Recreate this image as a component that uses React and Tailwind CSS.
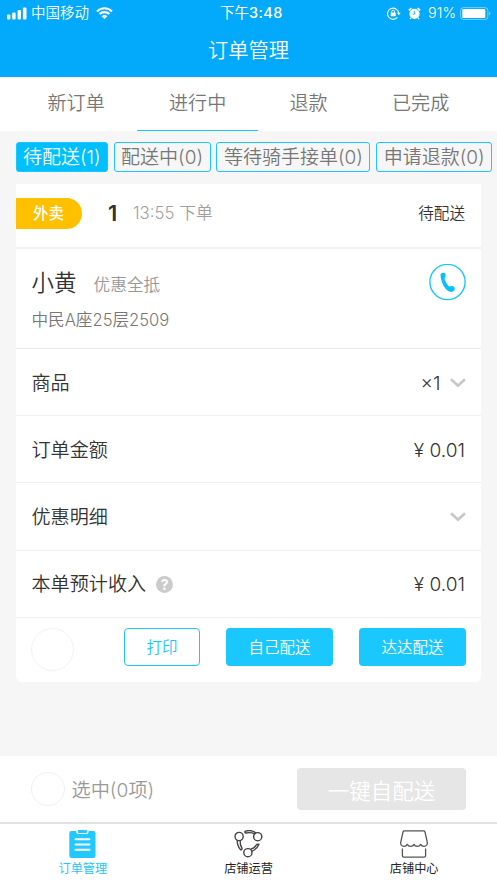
import React from 'react';
import clsx from 'clsx';

const TABS = [
  { label: '新订单', width: 'w-[137px]', offset: 'pl-[47.5px]' },
  { label: '进行中', width: 'w-[121px]', offset: 'pl-8', active: true },
  { label: '退款', width: 'w-[121px]', offset: 'pl-[31.5px]' },
  { label: '已完成', width: 'w-[118px]', offset: 'pl-[13px]' },
];

const FILTERS = [
  { label: '待配送', count: 1, width: 'w-[92px]', active: true },
  { label: '配送中', count: 0, width: 'w-[97px]' },
  { label: '等待骑手接单', count: 0, width: 'w-[154px]' },
  { label: '申请退款', count: 0, width: 'w-[116px]' },
];

function SignalIcon() {
  return (
    <svg className="w-5 h-[13px]" viewBox="0 0 20 13" fill="#fff">
      <rect x="0" y="7.5" width="3.4" height="5" rx="1" />
      <rect x="5.2" y="5.5" width="3.4" height="7" rx="1" />
      <rect x="10.6" y="3" width="3.4" height="9.5" rx="1" />
      <rect x="15.9" y="0.5" width="3.6" height="12" rx="1" />
    </svg>
  );
}

function WifiIcon() {
  return (
    <svg className="w-[17px] h-3" viewBox="0 0 17 12" fill="none" stroke="#fff" strokeWidth="2.1">
      <path d="M1 4.4C5.2.1 11.8.1 16 4.4" />
      <path d="M3.6 7.1c2.8-2.7 7-2.7 9.8 0" />
      <path d="M5.6 9.2c1.7-1.5 4.1-1.5 5.8 0L8.5 12z" fill="#fff" stroke="none" />
    </svg>
  );
}

function LockIcon() {
  return (
    <svg className="w-[14px] h-[13px]" viewBox="0 0 14 13" fill="none" stroke="#fff">
      <path d="M10.4 10.4A5.6 5.6 0 1 1 11.7 6" strokeWidth="1.1" />
      <path d="M9.8 5.7h3.9l-1.9 2.5z" fill="#fff" stroke="none" />
      <rect x="3.7" y="5.6" width="5" height="3.7" rx=".4" fill="#fff" stroke="none" />
      <path d="M4.8 5.8V4.6a1.4 1.4 0 0 1 2.8 0v1.2" strokeWidth="1" />
    </svg>
  );
}

function AlarmIcon() {
  return (
    <svg className="w-[13px] h-[13px]" viewBox="0 0 13 13" fill="none">
      <circle cx="6.5" cy="6.8" r="5.1" fill="#fff" />
      <path d="M.8 3.4 3.4 1M12.2 3.4 9.6 1" stroke="#fff" strokeWidth="1.5" />
      <path d="m3 10.8-1 1.2M10 10.8l1 1.2" stroke="#fff" strokeWidth="1.3" />
      <path d="M6.7 4v3.1H4.5" stroke="#03a9fa" strokeWidth=".9" />
    </svg>
  );
}

function BatteryIcon() {
  return (
    <svg className="w-[31px] h-[13px]" viewBox="0 0 31 13">
      <rect x=".6" y=".6" width="27.3" height="11.8" rx="3" fill="none" stroke="#fff" strokeOpacity=".45" />
      <rect x="2.3" y="2" width="23" height="9" rx="1" fill="#fff" />
      <path d="M29.2 4.4c1.7.8 1.7 3.4 0 4.2z" fill="#fff" fillOpacity=".5" />
    </svg>
  );
}

function ChevronIcon() {
  return (
    <svg className="w-4 h-[10px] -mr-[0.5px]" viewBox="0 0 16 10" fill="none" stroke="#c8c8c8" strokeWidth="2.8">
      <path d="m1 1.2 7 6.5 7-6.5" />
    </svg>
  );
}

function PhoneIcon() {
  return (
    <svg className="w-[37px] h-[37px] -mr-px" viewBox="0 0 37 37" fill="none">
      <circle cx="18.5" cy="18" r="17.6" stroke="#1ac6ff" strokeWidth="1.4" />
      <path
        d="M11.500 11.500C11.400 9.800 12.500 8.800 14.100 8.800c1.700 0 2.800 1.200 2.700 2.900-.1 1.300-1.300 1.800-1.200 2.800.3 2.600 2.200 5.700 4.400 7.700.9.700 1.700-.2 2.900-.1 1.900.2 3.100 1.600 2.900 3.200-.3 1.800-2.300 2.900-4.600 2.500C15.500 26.500 11.900 17 11.500 11.500z"
        fill="#08c0ff"
      />
    </svg>
  );
}

function ClipboardIcon() {
  return (
    <svg className="w-[27px] h-7" viewBox="0 0 27 28" fill="none">
      <rect x=".3" y="1" width="26.2" height="27" rx="2.2" fill="#22c8ff" />
      <path d="M7.2 0v1.7a2.3 2.3 0 0 0 2.3 2.3h7.8a2.3 2.3 0 0 0 2.3-2.3V0z" fill="#fff" />
      <rect x="8.7" y="0" width="9.4" height="3" rx="1" fill="#22c8ff" />
      <path d="M6.5 9.2h14M6.5 14.5h14M6.5 19.8h14" stroke="#fff" strokeWidth="1.9" strokeLinecap="round" />
    </svg>
  );
}

// three linked nodes, each with a tail curving towards the next one
function OperationIcon() {
  return (
    <svg className="w-[29px] h-7" viewBox="0 0 29 28" fill="none" stroke="#444" strokeWidth="1.4" strokeLinejoin="round">
      <circle cx="5.1" cy="6.5" r="4.1" />
      <circle cx="23.7" cy="6.7" r="4.1" />
      <circle cx="13.9" cy="22.7" r="4.1" />
      <path d="M20.6 4C18 2.4 15.2 2.3 12 3c-1.100.2-1.600-1.500-.5-1.900 3.900-1 7.300-.6 10.400 1.800" />
      <path d="M3.300 10.300c-.2 3.300.8 6.500 3 9.100.9.900 2.300 0 1.600-1.200-1.400-2.300-2-4.700-1.700-7.700" />
      <path d="M17.700 21.400c3.400-1.500 6.200-4.200 7.200-7.200l-2.300.3c-1.200 2.300-3.200 3.900-6 4.700" />
    </svg>
  );
}

function ShopIcon() {
  return (
    <svg className="w-7 h-7" viewBox="0 0 28 28" fill="none" stroke="#555" strokeWidth="1.3" strokeLinejoin="round">
      <path d="M4.3.8h19.4c.7 0 1 .3 1.200.9l2.300 10.200c.6 2.300-.7 4.500-3.100 4.500-1.600 0-2.800-.8-3.400-2-.6 1.200-1.900 2-3.400 2s-2.700-.8-3.300-2c-.6 1.200-1.800 2-3.300 2s-2.800-.8-3.400-2c-.6 1.200-1.800 2-3.400 2-2.400 0-3.700-2.200-3.100-4.500L3.100 1.700c.2-.6.500-.9 1.200-.9z" />
      <path d="M2.400 18.600v7.100c0 .9.500 1.400 1.400 1.400h20.400c.9 0 1.400-.5 1.400-1.400v-7.100" />
    </svg>
  );
}

const NAV_ITEMS = [
  { icon: ClipboardIcon, label: '订单管理', active: true },
  { icon: OperationIcon, label: '店铺运营' },
  { icon: ShopIcon, label: '店铺中心' },
];

function Header() {
  return (
    <header className="h-[77px] bg-[#03a9fa] text-white">
      <div className="h-[26px] flex items-center pl-[7px] pr-[6px] text-[14.5px]">
        <div className="w-[213px] flex items-center">
          <SignalIcon />
          <span className="ml-1 mr-[7px]">中国移动</span>
          <WifiIcon />
        </div>
        <span className="w-[70px] whitespace-nowrap font-normal">
          下午<span className="font-medium tracking-[0.4px]">3:48</span>
        </span>
        <div className="ml-auto flex items-center">
          <LockIcon />
          <span className="mx-[7px]"><AlarmIcon /></span>
          <span className="mr-1">91%</span>
          <BatteryIcon />
        </div>
      </div>
      <h1 className="text-center text-[20.3px] leading-[50px]">订单管理</h1>
    </header>
  );
}

function Row({ label, children }) {
  return (
    <div className="h-[67.2px] flex items-center justify-between pl-[15.5px] pr-4 pt-[1.6px] border-b-[1.5px] border-[#efefef] text-[19.1px]">
      {label}
      <div className="flex items-center">{children}</div>
    </div>
  );
}

function OrderCard() {
  return (
    <section className="mx-4 mt-3 h-[498px] bg-white rounded-b-md text-[#333]">
      <div className="h-[65px] flex items-center pr-4 pb-[5px] border-b-2 border-[#f2f2f2]">
        <span className="w-[66px] h-[31px] leading-[31px] pl-[17px] rounded-r-full bg-[#ffc000] text-white text-[15.5px] font-medium">外卖</span>
        <b className="ml-[26px] w-3 text-[22px] font-semibold">1</b>
        <span className="ml-[13px] pt-[2px] text-[16.8px] text-[#a0a0a0]">13:55 下单</span>
        <span className="ml-auto pt-[2px] text-[15.6px]">待配送</span>
      </div>
      <div className="h-[100px] flex justify-between pl-[15.5px] pr-4 pt-[15px] border-b border-[#e9e9e9]">
        <div>
          <div className="flex items-baseline h-[37px] leading-[38px]">
            <span className="text-[22.5px]">小黄</span>
            <span className="ml-[17px] text-[16.7px] text-[#999]">优惠全抵</span>
          </div>
          <p className="mt-[3px] text-[16.6px] leading-8 text-[#777]">中民A座25层2509</p>
        </div>
        <PhoneIcon />
      </div>
      <Row label="商品">
        <span className="mr-[9px]">×1</span>
        <ChevronIcon />
      </Row>
      <Row label="订单金额">¥ 0.01</Row>
      <Row label="优惠明细">
        <ChevronIcon />
      </Row>
      <Row
        label={
          <span className="flex items-center">
            本单预计收入
            <i className="ml-[10px] w-[17px] h-[17px] rounded-full bg-[#ccc] text-white text-[14px] leading-[17px] font-bold not-italic text-center">?</i>
          </span>
        }
      >
        ¥ 0.01
      </Row>
      <div className="flex pl-[15px] pr-[15px] pt-[10px] text-[15.5px]">
        <span className="w-[43px] h-[43px] rounded-full border border-[#f2f2f2]" />
        <button className="ml-[50px] w-[76px] h-[38px] pt-px rounded-[4px] border-[1.5px] border-[#1ac7ff] text-[#1ac7ff]">打印</button>
        <button className="ml-[26px] w-[107px] h-[38px] pt-px rounded-[4px] bg-[#1ac7ff] text-white">自己配送</button>
        <button className="ml-[26px] w-[107px] h-[38px] pt-px rounded-[4px] bg-[#1ac7ff] text-white">达达配送</button>
      </div>
    </section>
  );
}

export default function App() {
  return (
    <div className="w-[497px] h-[883px] flex flex-col overflow-hidden bg-[#f6f6f6] font-[Inter,'Noto_Sans_CJK_SC',sans-serif] font-[350]">
      <Header />
      <nav className="h-[54px] flex bg-white text-[19.1px] leading-[53px] text-[#777]">
        {TABS.map((tab) => (
          <div key={tab.label} className={clsx(tab.offset, tab.width, tab.active && 'border-b border-[#1ac7ff]')}>
            {tab.label}
          </div>
        ))}
      </nav>
      <div className="flex gap-[5.8px] pl-[15.8px] pt-[11px]">
        {FILTERS.map((item) => (
          <button
            key={item.label}
            className={clsx(
              'shrink-0 h-[30px] pt-px rounded-[3px] border-[1.5px] border-[#1ac7ff] text-[19px] leading-[28px] whitespace-nowrap',
              item.width,
              item.active ? 'bg-[#00bfff] text-white' : 'text-[#777]'
            )}
          >
            {item.label}({item.count})
          </button>
        ))}
      </div>
      <OrderCard />
      <div className="mt-auto h-[66px] shrink-0 flex items-center bg-white px-[31px]">
        <span className="w-[34px] h-[34px] rounded-full border border-[#f0f0f0]" />
        <span className="ml-[6.5px] pt-[3px] text-[19.2px] text-[#999]">选中(0项)</span>
        <button className="ml-auto w-[169px] h-[42px] pt-1 rounded-[4px] bg-[#e6e6e6] text-white text-[21.5px]">一键自配送</button>
      </div>
      <footer className="h-[61px] shrink-0 flex bg-white border-t-2 border-[#e2e2e2]">
        {NAV_ITEMS.map((item) => {
          const Icon = item.icon;
          return (
            <div
              key={item.label}
              className={clsx('flex-1 flex flex-col items-center gap-[2px] pt-[6px] text-[12.2px] leading-[18px] font-normal', item.active ? 'text-[#1ac7ff]' : 'text-[#222]')}
            >
              <Icon />
              {item.label}
            </div>
          );
        })}
      </footer>
    </div>
  );
}
